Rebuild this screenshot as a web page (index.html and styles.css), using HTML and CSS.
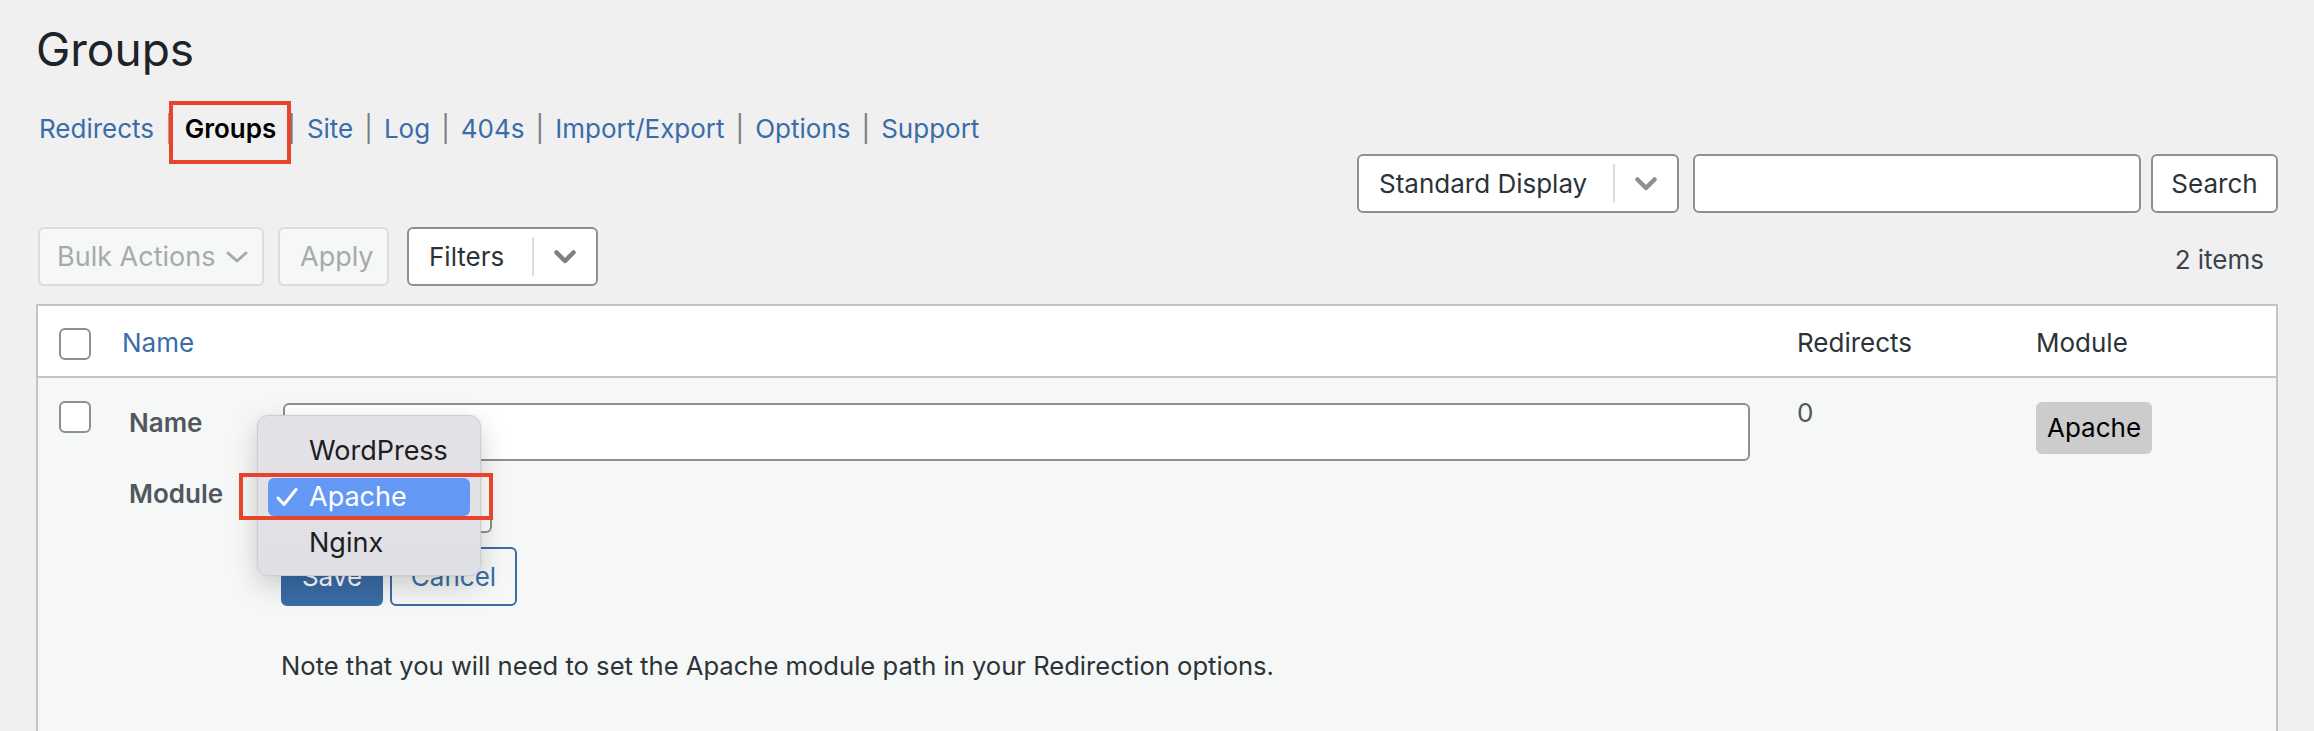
FILE: index.html
```html
<!DOCTYPE html>
<html lang="en">
<head>
<meta charset="utf-8">
<title>Groups</title>
<link rel="stylesheet" href="styles.css">
</head>
<body>
<div class="page">
  <h1 class="title">Groups</h1>

  <nav class="subnav">
    <a class="navlink" href="#">Redirects</a><span class="sep">|</span>
    <span class="navlink current">Groups</span><span class="sep">|</span>
    <a class="navlink" href="#">Site</a><span class="sep">|</span>
    <a class="navlink" href="#">Log</a><span class="sep">|</span>
    <a class="navlink" href="#">404s</a><span class="sep">|</span>
    <a class="navlink" href="#">Import/Export</a><span class="sep">|</span>
    <a class="navlink" href="#">Options</a><span class="sep">|</span>
    <a class="navlink" href="#">Support</a>
  </nav>

  <div class="searchbar">
    <div class="select split display-select">
      <span class="select-text">Standard Display</span>
      <span class="select-divider"></span>
      <span class="select-arrow"><svg width="22" height="14" viewBox="0 0 22 14"><path d="M2.5 2.5 L11 11 L19.5 2.5" fill="none" stroke="#8c8f94" stroke-width="4.5" stroke-linecap="round" stroke-linejoin="round"/></svg></span>
    </div>
    <div class="search-input"></div>
    <button class="btn search-btn">Search</button>
  </div>

  <div class="tablenav">
    <div class="tablenav-left">
      <div class="bulk">
        <span>Bulk Actions</span>
        <svg width="22" height="12" viewBox="0 0 22 12"><path d="M2 2 L11 10 L20 2" fill="none" stroke="#a7aaad" stroke-width="3" stroke-linecap="round" stroke-linejoin="round"/></svg>
      </div>
      <button class="btn apply">Apply</button>
      <div class="select split filters">
        <span class="select-text">Filters</span>
        <span class="select-divider"></span>
        <span class="select-arrow"><svg width="22" height="14" viewBox="0 0 22 14"><path d="M2.5 2.5 L11 11 L19.5 2.5" fill="none" stroke="#7c7f84" stroke-width="4.5" stroke-linecap="round" stroke-linejoin="round"/></svg></span>
      </div>
    </div>
    <div class="count">2 items</div>
  </div>

  <div class="table">
    <div class="trow thead">
      <div class="cell cb"><span class="checkbox"></span></div>
      <div class="cell th-name"><a class="sortlink" href="#">Name</a></div>
      <div class="cell th">Redirects</div>
      <div class="cell th">Module</div>
    </div>
    <div class="trow edit-row">
      <div class="cell cb"><span class="checkbox"></span></div>
      <div class="cell edit">
        <div class="form">
          <div class="label">Name</div>
          <div class="field"><div class="text-input"></div></div>

          <div class="label label-module">Module</div>
          <div class="field field-module">
            <div class="module-wrap">
              <div class="select module-select">
                <span class="select-text">Apache</span>
                <svg width="22" height="14" viewBox="0 0 22 14"><path d="M2.5 2.5 L11 11 L19.5 2.5" fill="none" stroke="#50575e" stroke-width="3" stroke-linecap="round" stroke-linejoin="round"/></svg>
              </div>
              <div class="menu">
                <div class="menu-item">WordPress</div>
                <div class="menu-item selected">
                  <svg class="check" width="22" height="20" viewBox="0 0 22 20"><path d="M2 11 L8 17.5 L20 2.5" fill="none" stroke="#ffffff" stroke-width="3" stroke-linecap="round" stroke-linejoin="round"/></svg>
                  Apache
                </div>
                <div class="menu-item">Nginx</div>
              </div>
            </div>
          </div>

          <div class="spacer"></div>
          <div class="actions">
            <button class="btn btn-primary">Save</button>
            <button class="btn btn-outline">Cancel</button>
          </div>

          <div class="spacer"></div>
          <p class="note">Note that you will need to set the Apache module path in your Redirection options.</p>
        </div>
      </div>
      <div class="cell redirects">0</div>
      <div class="cell module"><span class="badge">Apache</span></div>
    </div>
  </div>
</div>
</body>
</html>
```

FILE: styles.css
```css
* {
  box-sizing: border-box;
}

html,
body {
  margin: 0;
  padding: 0;
}

body {
  background: #f0f0f1;
  font-family: Inter, "Noto Sans", sans-serif;
  color: #2c3338;
  font-size: 26px;
  line-height: 40px;
  overflow: hidden;
}

.page {
  padding: 0 36px;
}

.title {
  margin: 19px 0 0;
  font-size: 46px;
  line-height: 60px;
  font-weight: 400;
  color: #1d2327;
}

/* sub navigation */
.subnav {
  margin: 30px 0 0 3px;
  display: flex;
  align-items: center;
  height: 40px;
}

.navlink {
  color: #3a6ca8;
  text-decoration: none;
  position: relative;
}

.navlink.current {
  color: #000;
  font-weight: 600;
}

.navlink.current::after {
  content: "";
  position: absolute;
  left: -16px;
  right: -15px;
  top: -8px;
  bottom: -15px;
  border: 4px solid #e8432b;
}

.sep {
  color: #787c82;
  margin: 0 11px;
}

/* controls */
.btn {
  font-family: inherit;
  font-size: 26px;
  line-height: 40px;
  height: 59px;
  border-radius: 6px;
  padding: 0 20px;
  cursor: pointer;
}

.select {
  display: flex;
  align-items: center;
  height: 59px;
  background: #fff;
  border: 2px solid #8c8f94;
  border-radius: 6px;
  color: #2c3338;
}

.select-text {
  flex: 1;
  white-space: nowrap;
}

.split .select-text {
  padding-left: 20px;
}

.select-divider {
  width: 2px;
  height: 39px;
  background: #dcdcde;
}

.select-arrow {
  width: 62px;
  display: flex;
  justify-content: center;
  align-items: center;
}

.select-arrow svg {
  display: block;
}

.searchbar {
  margin-top: 5px;
  display: flex;
  justify-content: flex-end;
  align-items: center;
}

.display-select {
  width: 322px;
}

.search-input {
  width: 448px;
  height: 59px;
  margin-left: 14px;
  background: #fff;
  border: 2px solid #8c8f94;
  border-radius: 6px;
}

.search-btn {
  width: 127px;
  margin-left: 10px;
  background: #fff;
  border: 2px solid #8c8f94;
  color: #2c3338;
  padding: 0;
  text-align: center;
}

/* table nav */
.tablenav {
  margin-top: 14px;
  height: 59px;
  display: flex;
  justify-content: space-between;
  align-items: center;
}

.tablenav-left {
  display: flex;
  align-items: center;
  margin-left: 2px;
}

.bulk {
  width: 226px;
  height: 59px;
  display: flex;
  align-items: center;
  justify-content: space-between;
  padding: 0 14px 0 17px;
  border: 2px solid #dcdcde;
  border-radius: 6px;
  background: #f6f7f7;
  color: #a7aaad;
  font-size: 27px;
}

.apply {
  width: 111px;
  margin-left: 14px;
  background: #f6f7f7;
  border: 2px solid #dcdcde;
  color: #a7aaad;
  font-size: 27px;
  padding: 0 0 0 20px;
  text-align: left;
}

.filters {
  width: 191px;
  margin-left: 18px;
}

.count {
  color: #3c434a;
  padding-top: 7px;
  margin-right: 14px;
}

/* table */
.table {
  margin-top: 18px;
  border: 2px solid #c3c4c7;
  background: #fff;
}

.trow {
  display: grid;
  grid-template-columns: 70px 1fr 239px 256px;
}

.thead {
  height: 72px;
  border-bottom: 2px solid #c3c4c7;
}

.cell {
  padding-left: 16px;
}

.thead .cell {
  padding-top: 17px;
}

.checkbox {
  display: block;
  width: 32px;
  height: 32px;
  border: 2px solid #8c8f94;
  border-radius: 6px;
  background: #fff;
}

.cell.cb {
  padding-left: 21px;
}

.thead .cell.cb {
  padding-top: 22px;
}

.th-name {
  padding-left: 14px;
}

.sortlink {
  color: #3a6ca8;
  text-decoration: none;
}

.th {
  color: #2c3338;
}

.edit-row {
  background: #f6f7f7;
  height: 420px;
}

.edit-row .cell.cb {
  padding-top: 23px;
}

.cell.edit {
  padding: 25px 31px 0 21px;
}

.form {
  display: grid;
  grid-template-columns: 154px 1fr;
}

.label {
  font-weight: 600;
  color: #50575e;
}

.label-module,
.field-module {
  margin-top: 13px;
}

.text-input {
  height: 58px;
  background: #fff;
  border: 2px solid #8c8f94;
  border-radius: 6px;
}

.module-wrap {
  position: relative;
  width: 209px;
}

.module-select {
  padding: 0 14px 0 20px;
}

.menu {
  position: absolute;
  left: -26px;
  top: -59px;
  width: 224px;
  padding: 16px 10px 13px;
  background: linear-gradient(#e4e2e7, #dfe0e6);
  border: 1px solid #cfcdd3;
  border-radius: 11px;
  box-shadow: 0 10px 28px rgba(0, 0, 0, 0.18), 0 0 2px rgba(0, 0, 0, 0.1);
  z-index: 5;
  font-size: 27px;
  color: #1d1d1f;
}

.menu-item {
  position: relative;
  height: 38px;
  line-height: 38px;
  padding-left: 41px;
  border-radius: 6px;
}

.menu-item + .menu-item {
  margin-top: 8px;
}

.menu-item.selected {
  background: #6399f4;
  color: #fff;
}

.menu-item.selected::after {
  content: "";
  position: absolute;
  left: -29px;
  right: -23px;
  top: -5px;
  bottom: -4px;
  border: 4px solid #e8432b;
}

.check {
  position: absolute;
  left: 8px;
  top: 9px;
}

.actions {
  margin: 14px 0 0 -2px;
  display: flex;
}

.btn-primary {
  width: 102px;
  background: #3a6ca6;
  border: 2px solid #3a6ca6;
  color: #fff;
  padding: 0;
}

.btn-outline {
  width: 127px;
  margin-left: 7px;
  background: #f6f7f7;
  border: 2px solid #3a6ca6;
  color: #3a6ca6;
  padding: 0;
}

.note {
  margin: 40px 0 0 -2px;
  font-size: 25.6px;
  color: #2c3338;
  white-space: nowrap;
}

.cell.redirects {
  padding-top: 15px;
  color: #50575e;
}

.cell.module {
  padding-top: 24px;
}

.badge {
  display: inline-block;
  padding: 6px 11px;
  background: #cccccc;
  border-radius: 6px;
  color: #000;
}
```
